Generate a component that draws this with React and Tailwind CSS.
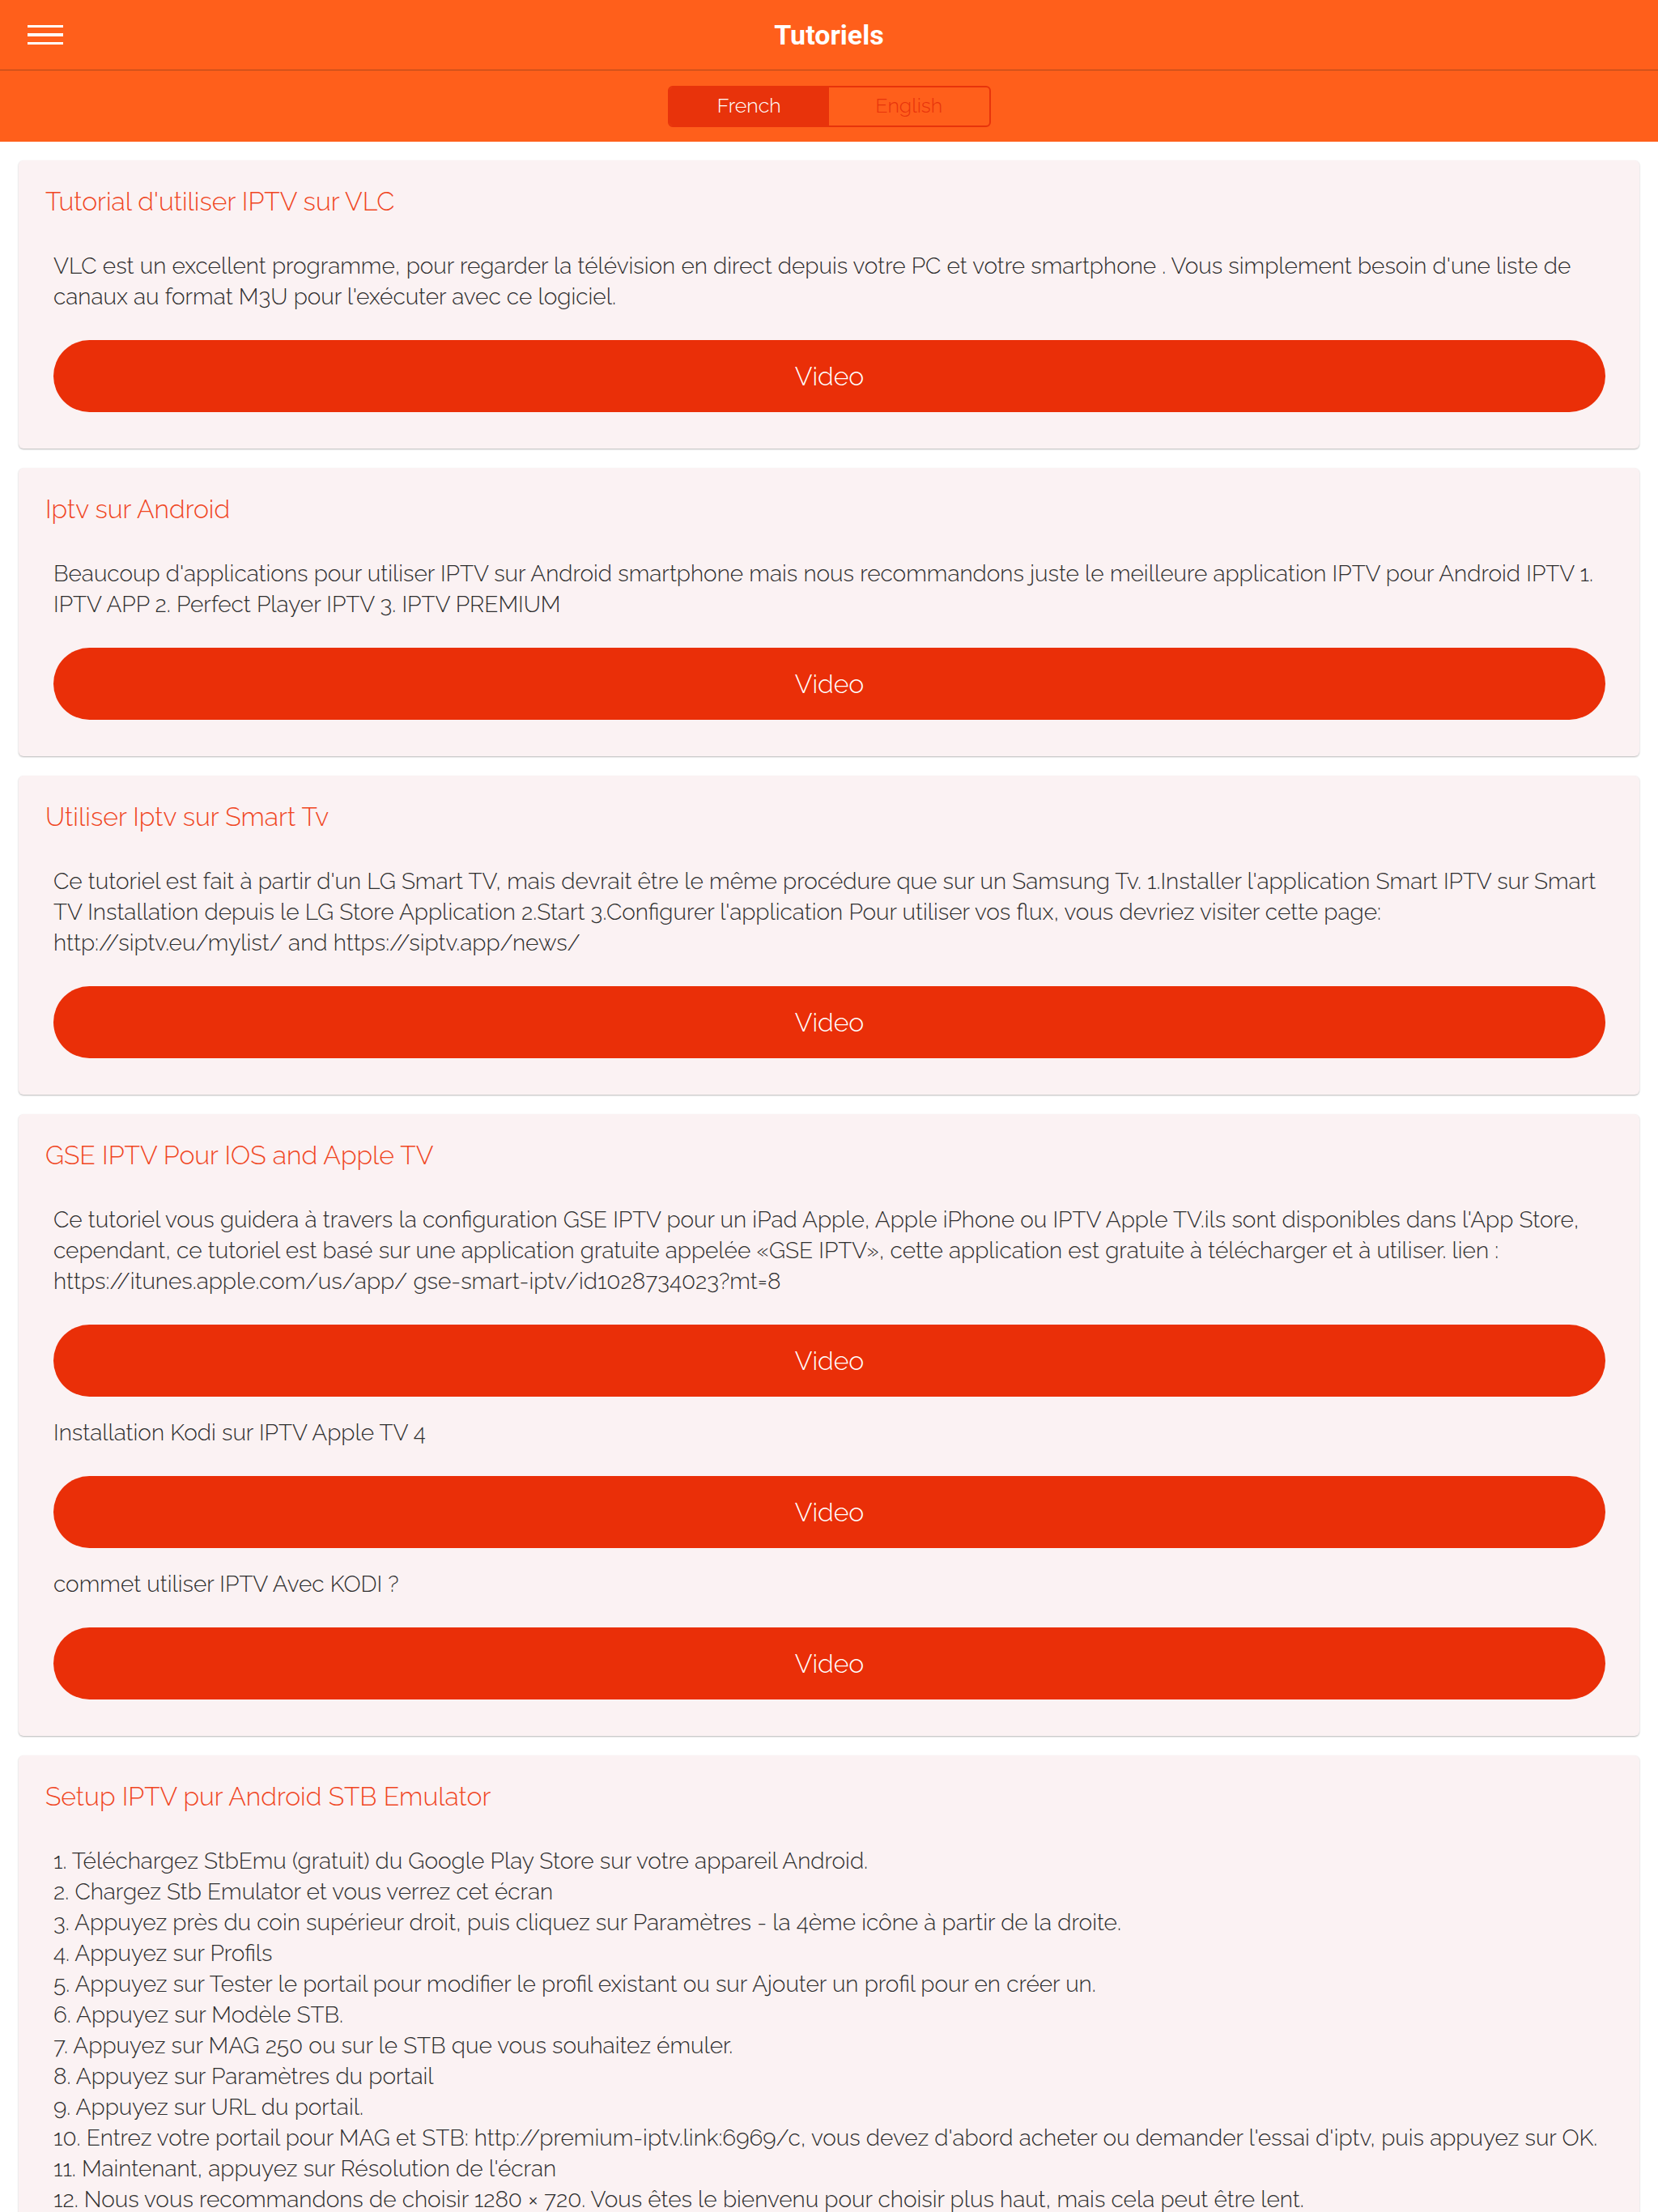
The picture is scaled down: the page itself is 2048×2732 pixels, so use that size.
import { useState } from 'react'

const tutorials = [
  {
    title: "Tutorial d'utiliser IPTV sur VLC",
    blocks: [
      "VLC est un excellent programme, pour regarder la télévision en direct depuis votre PC et votre smartphone . Vous simplement besoin d'une liste de canaux au format M3U pour l'exécuter avec ce logiciel.",
    ],
  },
  {
    title: 'Iptv sur Android',
    blocks: [
      "Beaucoup d'applications pour utiliser IPTV sur Android smartphone mais nous recommandons juste le meilleure application IPTV pour Android IPTV 1. IPTV APP 2. Perfect Player IPTV 3. IPTV PREMIUM",
    ],
  },
  {
    title: 'Utiliser Iptv sur Smart Tv',
    blocks: [
      "Ce tutoriel est fait à partir d'un LG Smart TV, mais devrait être le même procédure que sur un Samsung Tv. 1.Installer l'application Smart IPTV sur Smart TV Installation depuis le LG Store Application 2.Start 3.Configurer l'application Pour utiliser vos flux, vous devriez visiter cette page: http://siptv.eu/mylist/ and https://siptv.app/news/",
    ],
  },
  {
    title: 'GSE IPTV Pour IOS and Apple TV',
    blocks: [
      "Ce tutoriel vous guidera à travers la configuration GSE IPTV pour un iPad Apple, Apple iPhone ou IPTV Apple TV.ils sont disponibles dans l'App Store, cependant, ce tutoriel est basé sur une application gratuite appelée «GSE IPTV», cette application est gratuite à télécharger et à utiliser. lien : https://itunes.apple.com/us/app/ gse-smart-iptv/id1028734023?mt=8",
      'Installation Kodi sur IPTV Apple TV 4',
      'commet utiliser IPTV Avec KODI ?',
    ],
  },
]

const stbSteps = [
  '1. Téléchargez StbEmu (gratuit) du Google Play Store sur votre appareil Android.',
  '2. Chargez Stb Emulator et vous verrez cet écran',
  '3. Appuyez près du coin supérieur droit, puis cliquez sur Paramètres - la 4ème icône à partir de la droite.',
  '4. Appuyez sur Profils',
  '5. Appuyez sur Tester le portail pour modifier le profil existant ou sur Ajouter un profil pour en créer un.',
  '6. Appuyez sur Modèle STB.',
  '7. Appuyez sur MAG 250 ou sur le STB que vous souhaitez émuler.',
  '8. Appuyez sur Paramètres du portail',
  '9. Appuyez sur URL du portail.',
  "10. Entrez votre portail pour MAG et STB: http://premium-iptv.link:6969/c, vous devez d'abord acheter ou demander l'essai d'iptv, puis appuyez sur OK.",
  "11. Maintenant, appuyez sur Résolution de l'écran",
  '12. Nous vous recommandons de choisir 1280 × 720. Vous êtes le bienvenu pour choisir plus haut, mais cela peut être lent.',
  "13. Appuyez sur OK et redémarrez l'application.",
]

const VideoButton = () => (
  <button className="w-full h-[89px] rounded-full bg-[#ea2f08] text-white text-[32px] font-light">
    Video
  </button>
)

const Card = ({ title, children }) => (
  <div className="bg-[#fbf2f3] rounded-md shadow-[0_1px_2px_rgba(0,0,0,0.28)] pt-[32px] pb-[45px]">
    <h2 className="pl-[33px] text-[32px] leading-[38px] font-light text-[#f0461f]">{title}</h2>
    <div className="pl-[43px] pr-[42px]">{children}</div>
  </div>
)

const App = () => {
  const [lang, setLang] = useState('fr')

  return (
    <div className="min-h-screen bg-white font-[Raleway,Lato,sans-serif]">
      {/* top bar */}
      <div className="h-[87px] bg-[#ff5f1b] border-b border-[#b0481a] grid grid-cols-[1fr_auto_1fr] items-center">
        <button className="ml-[34px] w-[44px] flex flex-col gap-[7px]">
          <span className="h-[3.5px] bg-white block"></span>
          <span className="h-[3.5px] bg-white block"></span>
          <span className="h-[3.5px] bg-white block"></span>
        </button>
        <h1 className="text-white text-[34px] font-bold font-[Roboto,sans-serif]">Tutoriels</h1>
        <div></div>
      </div>

      {/* language switch */}
      <div className="h-[88px] bg-[#ff5f1b] flex items-center justify-center">
        <div className="flex w-[399px] h-[51px] rounded-md border-2 border-[#e8330b] overflow-hidden text-[25px] font-light">
          <button
            onClick={() => setLang('fr')}
            className={lang === 'fr' ? 'flex-1 bg-[#e8330b] text-white' : 'flex-1 text-[#e8330b]'}
          >
            French
          </button>
          <button
            onClick={() => setLang('en')}
            className={lang === 'en' ? 'flex-1 bg-[#e8330b] text-white' : 'flex-1 text-[#e8330b]'}
          >
            English
          </button>
        </div>
      </div>

      <div className="px-[23px] pt-[23px] pb-[24px] flex flex-col gap-[24px]">
        {tutorials.map((t) => (
          <Card key={t.title} title={t.title}>
            {t.blocks.map((text, i) => (
              <div key={i}>
                <p
                  className={
                    (i === 0 ? 'mt-[42px] ' : 'mt-[26px] ') +
                    'mb-[34px] text-[28px] leading-[38px] font-light text-[#2e2e2e]'
                  }
                >
                  {text}
                </p>
                <VideoButton />
              </div>
            ))}
          </Card>
        ))}

        <Card title="Setup IPTV pur Android STB Emulator">
          <div className="mt-[42px] text-[28px] leading-[38px] font-light text-[#2e2e2e]">
            {stbSteps.map((s) => (
              <p key={s}>{s}</p>
            ))}
          </div>
        </Card>
      </div>
    </div>
  )
}

export default App
